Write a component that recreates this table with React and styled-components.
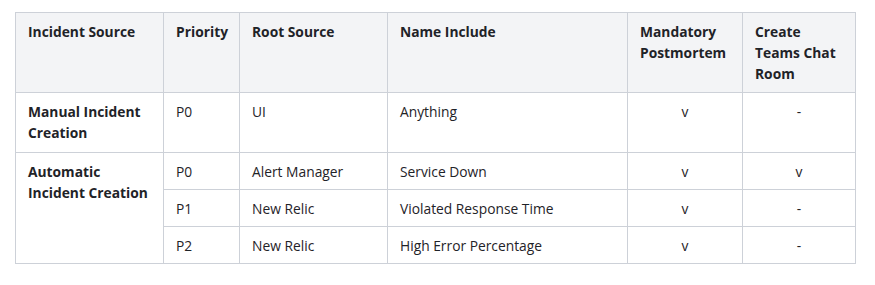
import React from 'react';
import styled, { createGlobalStyle } from 'styled-components';

const GlobalStyle = createGlobalStyle`
  body {
    margin: 0;
    background: #ffffff;
    font-family: "Open Sans", "Noto Sans", sans-serif;
    color: #1f2328;
  }
`;

const Page = styled.div`
  padding: 12px 20px 0 15px;
`;

const Table = styled.table`
  border-collapse: collapse;
  table-layout: fixed;
  width: 841px;
  font-size: 13.8px;
  line-height: 21px;
`;

const Th = styled.th`
  background: #f3f4f6;
  border: 1px solid #cdd1d8;
  padding: 8px 12px;
  text-align: left;
  vertical-align: top;
  font-weight: 700;
  height: 63px;
`;

const Td = styled.td`
  border: 1px solid #cdd1d8;
  padding: 8px 12px ${(p) => (p.$tall ? '9px' : '7px')};
  vertical-align: top;
  text-align: ${(p) => (p.$center ? 'center' : 'left')};
  font-weight: ${(p) => (p.$bold ? 700 : 400)};
`;

const columns = [148, 76, 148, 240, 115, 113];

const headers = [
  'Incident Source',
  'Priority',
  'Root Source',
  'Name Include',
  'Mandatory Postmortem',
  'Create Teams Chat Room',
];

const rows = [
  { source: 'Manual Incident Creation', span: 1, priority: 'P0', root: 'UI', name: 'Anything', post: 'v', chat: '-', tall: true },
  { source: 'Automatic Incident Creation', span: 3, priority: 'P0', root: 'Alert Manager', name: 'Service Down', post: 'v', chat: 'v' },
  { priority: 'P1', root: 'New Relic', name: 'Violated Response Time', post: 'v', chat: '-' },
  { priority: 'P2', root: 'New Relic', name: 'High Error Percentage', post: 'v', chat: '-' },
];

const App = () => (
  <Page>
    <GlobalStyle />
    <Table>
      <colgroup>
        {columns.map((w, i) => (
          <col key={i} style={{ width: w }} />
        ))}
      </colgroup>
      <thead>
        <tr>
          {headers.map((h) => (
            <Th key={h}>{h}</Th>
          ))}
        </tr>
      </thead>
      <tbody>
        {rows.map((r, i) => (
          <tr key={i}>
            {r.source && (
              <Td $bold $tall={r.tall} rowSpan={r.span}>
                {r.source}
              </Td>
            )}
            <Td $tall={r.tall}>{r.priority}</Td>
            <Td $tall={r.tall}>{r.root}</Td>
            <Td $tall={r.tall}>{r.name}</Td>
            <Td $tall={r.tall} $center>{r.post}</Td>
            <Td $tall={r.tall} $center>{r.chat}</Td>
          </tr>
        ))}
      </tbody>
    </Table>
  </Page>
);

export default App;
